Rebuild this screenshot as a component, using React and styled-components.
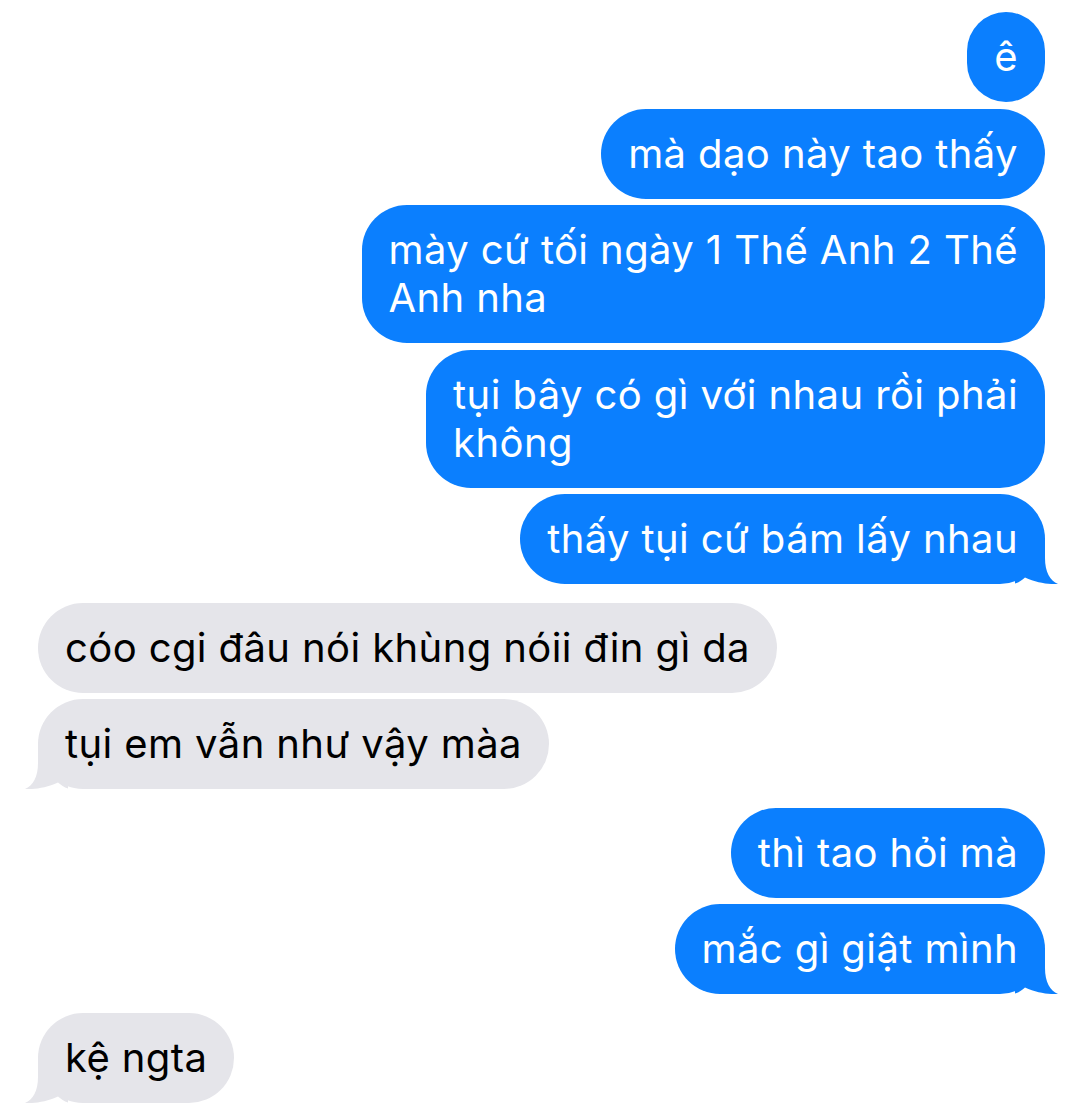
import styled, { createGlobalStyle } from "styled-components";

const GlobalStyle = createGlobalStyle`
  body {
    margin: 0;
    background: #fff;
    font-family: Inter, "Noto Sans", "Liberation Sans", sans-serif;
  }
`;

const BLUE = "#0b7ffe";
const GRAY = "#e5e5ea";

// lines are broken where the reference wraps them
const messages = [
  { from: "me", lines: ["ê"] },
  { from: "me", lines: ["mà dạo này tao thấy"] },
  { from: "me", lines: ["mày cứ tối ngày 1 Thế Anh 2 Thế", "Anh nha"] },
  { from: "me", lines: ["tụi bây có gì với nhau rồi phải", "không"] },
  { from: "me", lines: ["thấy tụi cứ bám lấy nhau"], tail: true },
  { from: "them", lines: ["cóo cgi đâu nói khùng nóii đin gì da"] },
  { from: "them", lines: ["tụi em vẫn như vậy màa"], tail: true },
  { from: "me", lines: ["thì tao hỏi mà"] },
  { from: "me", lines: ["mắc gì giật mình"], tail: true },
  { from: "them", lines: ["kệ ngta"], tail: true },
];

const Thread = styled.div`
  display: flex;
  flex-direction: column;
  padding: 12px 35px 0 38px;
`;

const Bubble = styled.div`
  position: relative;
  box-sizing: border-box;
  align-self: ${(p) => (p.$me ? "flex-end" : "flex-start")};
  padding: 21px 27px;
  border-radius: 45px;
  font-size: 40px;
  line-height: 48px;
  letter-spacing: 0.4px;
  white-space: nowrap;
  background: ${(p) => (p.$me ? BLUE : GRAY)};
  color: ${(p) => (p.$me ? "#fff" : "#000")};
  margin-top: ${(p) => (p.$gap ? "18.5px" : "6.5px")};

  &:first-child {
    margin-top: 0;
  }
`;

const Tail = styled.svg`
  position: absolute;
  bottom: 0;
  width: 44px;
  height: 46px;
  ${(p) => (p.$me ? "right: -14px;" : "left: -14px; transform: scaleX(-1);")}
`;

const Line = styled.span`
  position: relative;
  z-index: 1;
  display: block;
`;

function BubbleTail({ me }) {
  return (
    <Tail $me={me} viewBox="0 0 44 46">
      <path
        d="M0 0 H30 V20 C30 34 35 42.5 43 46 C34 46.5 22 45 10 39.5 C7 42 4 44.5 0 45.5 Z"
        fill={me ? BLUE : GRAY}
      />
    </Tail>
  );
}

export default function App() {
  return (
    <>
      <GlobalStyle />
      <Thread>
        {messages.map((m, i) => {
          const me = m.from === "me";
          const gap = i > 0 && messages[i - 1].tail;
          return (
            <Bubble key={i} $me={me} $gap={gap}>
              {m.tail && <BubbleTail me={me} />}
              {m.lines.map((l, j) => (
                <Line key={j}>{l}</Line>
              ))}
            </Bubble>
          );
        })}
      </Thread>
    </>
  );
}
